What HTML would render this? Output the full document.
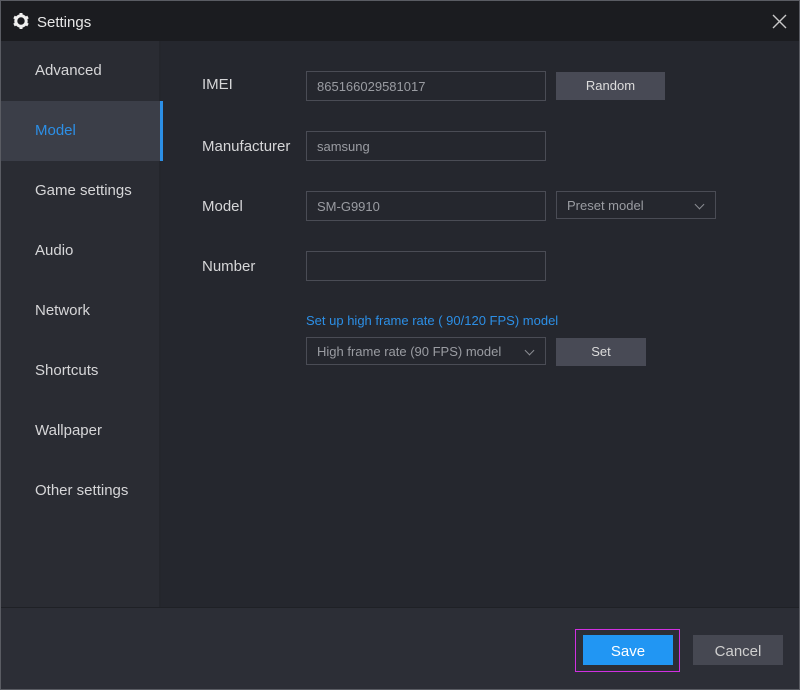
<!DOCTYPE html>
<html><head><style>
*{margin:0;padding:0;box-sizing:border-box}
body{width:800px;height:690px;background:#25272e;font-family:"Liberation Sans",sans-serif;position:relative;overflow:hidden}
.frame{position:absolute;inset:0;border:1px solid #5a5c63;pointer-events:none;z-index:10}
.title{position:absolute;left:0;top:0;width:800px;height:41px;background:#1b1c20;color:#e8e8e8;font-size:15px}
.title span{position:absolute;left:37px;top:14px}
.side{position:absolute;left:0;top:41px;width:161px;height:566px;background:#2a2c33;border-right:2px solid #24262c}
.item{position:absolute;left:0;width:161px;height:60px;color:#d6d6d8;font-size:15px;padding:21px 0 0 35px}
.sel{background:#3b3e48;color:#2c8fe6}
.sel:after{content:"";position:absolute;right:-2px;top:0;width:3px;height:60px;background:#2c8fe6}
.lbl{position:absolute;left:202px;color:#d6d6d8;font-size:15px}
.inp{position:absolute;left:306px;width:240px;height:30px;border:1px solid #4a4c55;background:#25272e;color:#9a9ca2;font-size:13px;padding:7px 10px}
.btn{position:absolute;background:#484a55;color:#dcdcdc;font-size:13px;text-align:center}
.dd{position:absolute;border:1px solid #4a4c55;color:#9a9ca2;font-size:13px;padding:6px 10px}
.chev{position:absolute;right:12px;top:9px;width:7px;height:7px;border-right:1px solid #8a8c92;border-bottom:1px solid #8a8c92;transform:rotate(45deg)}
.foot{position:absolute;left:0;top:607px;width:800px;height:83px;background:#2c2e36;border-top:1px solid #1f2126}
</style></head><body>
<div class="title">
<svg style="position:absolute;left:12px;top:12px" width="18" height="18" viewBox="0 0 18 18"><circle cx="9" cy="9" r="5.2" fill="none" stroke="#f0f0f0" stroke-width="3"/><g stroke="#f0f0f0" stroke-width="3"><line x1="9" y1="1" x2="9" y2="3.5"/><line x1="9" y1="14.5" x2="9" y2="17"/><line x1="2" y1="5" x2="4.2" y2="6.2"/><line x1="13.8" y1="11.8" x2="16" y2="13"/><line x1="2" y1="13" x2="4.2" y2="11.8"/><line x1="13.8" y1="6.2" x2="16" y2="5"/></g></svg>
<span>Settings</span>
<svg style="position:absolute;left:772px;top:14px" width="15" height="15" viewBox="0 0 15 15"><path d="M1 1L14 14M14 1L1 14" stroke="#c8c8c8" stroke-width="1.4"/></svg>
</div>
<div class="side">
<div class="item" style="top:0">Advanced</div>
<div class="item sel" style="top:60px">Model</div>
<div class="item" style="top:120px">Game settings</div>
<div class="item" style="top:180px">Audio</div>
<div class="item" style="top:240px">Network</div>
<div class="item" style="top:300px">Shortcuts</div>
<div class="item" style="top:360px">Wallpaper</div>
<div class="item" style="top:420px">Other settings</div>
</div>
<div class="lbl" style="top:76px">IMEI</div>
<div class="inp" style="top:71px">865166029581017</div>
<div class="btn" style="left:556px;top:72px;width:109px;height:28px;line-height:28px">Random</div>
<div class="lbl" style="top:138px">Manufacturer</div>
<div class="inp" style="top:131px">samsung</div>
<div class="lbl" style="top:198px">Model</div>
<div class="inp" style="top:191px">SM-G9910</div>
<div class="dd" style="left:556px;top:191px;width:160px;height:28px">Preset model<div class="chev"></div></div>
<div class="lbl" style="top:258px">Number</div>
<div class="inp" style="top:251px"></div>
<div style="position:absolute;left:306px;top:313px;color:#2c8fe6;font-size:13px">Set up high frame rate ( 90/120 FPS) model</div>
<div class="dd" style="left:306px;top:337px;width:240px;height:28px;padding-top:6px">High frame rate (90 FPS) model<div class="chev"></div></div>
<div class="btn" style="left:556px;top:338px;width:90px;height:28px;line-height:28px">Set</div>
<div class="foot">
<div style="position:absolute;left:575px;top:21px;width:105px;height:43px;border:1px solid #d030e0"></div>
<div style="position:absolute;left:583px;top:27px;width:90px;height:30px;background:#2196f3;color:#fff;font-size:15px;text-align:center;line-height:34px">Save</div>
<div class="btn" style="left:693px;top:27px;width:90px;height:30px;line-height:34px;font-size:15px;background:#464852;color:#cfcfcf">Cancel</div>
</div>
<div class="frame"></div>
</body></html>
